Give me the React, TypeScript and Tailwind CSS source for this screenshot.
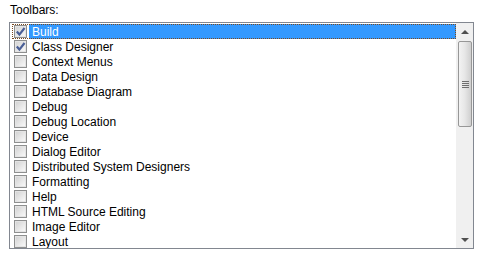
import React from 'react';

const items = [
  'Build',
  'Class Designer',
  'Context Menus',
  'Data Design',
  'Database Diagram',
  'Debug',
  'Debug Location',
  'Device',
  'Dialog Editor',
  'Distributed System Designers',
  'Formatting',
  'Help',
  'HTML Source Editing',
  'Image Editor',
  'Layout',
];

const checked = new Set(['Build', 'Class Designer']);

const Check: React.FC<{ on: boolean }> = ({ on }) => (
  <div className="w-[13px] h-[13px] border border-[#8e8f8f] bg-white flex items-center justify-center shrink-0">
    <div className="w-[11px] h-[11px] border border-[#e4e4e4] bg-gradient-to-br from-[#d4d4d4] to-[#f8f8f8] relative">
      {on && (
        <svg viewBox="0 0 9 9" className="absolute -left-px -top-px w-[11px] h-[11px]">
          <path d="M1.5 4.5 L3.6 7 L7.8 1.6" fill="none" stroke="#4a5f97" strokeWidth="1.8" />
        </svg>
      )}
    </div>
  </div>
);

const Row: React.FC<{ label: string; selected: boolean }> = ({ label, selected }) => (
  <div
    className={`h-[15px] flex items-center ${selected ? 'outline-1 outline-dotted outline-[#7a4a20] -outline-offset-1' : ''}`}
  >
    <div className="w-[17px] h-full flex items-center justify-center shrink-0">
      <Check on={checked.has(label)} />
    </div>
    <div
      className={`flex-1 h-full flex items-center pl-[3px] ${selected ? 'bg-[#3399ff] text-white' : 'text-black'}`}
    >
      {label}
    </div>
  </div>
);

const ScrollBar: React.FC = () => (
  <div className="w-[17px] bg-[#f0f0f0] border-l border-[#f0f0f0] flex flex-col shrink-0">
    <div className="h-[17px] flex items-center justify-center">
      <div className="w-0 h-0 border-l-[4px] border-r-[4px] border-b-[4px] border-l-transparent border-r-transparent border-b-[#505050]" />
    </div>
    <div className="mx-[1px] mt-[1px] h-[86px] border border-[#979797] rounded-[2px] bg-gradient-to-r from-[#f3f3f3] via-[#e6e6e6] to-[#cfcfcf] flex items-center justify-center">
      <div className="flex flex-col gap-[1px]">
        <div className="w-[7px] h-px bg-[#6f6f6f]" />
        <div className="w-[7px] h-px bg-[#6f6f6f]" />
        <div className="w-[7px] h-px bg-[#6f6f6f]" />
        <div className="w-[7px] h-px bg-[#6f6f6f]" />
      </div>
    </div>
    <div className="flex-1" />
    <div className="h-[17px] flex items-center justify-center">
      <div className="w-0 h-0 border-l-[4px] border-r-[4px] border-t-[4px] border-l-transparent border-r-transparent border-t-[#505050]" />
    </div>
  </div>
);

export default function App() {
  return (
    <div
      className="w-[485px] h-[263px] bg-white text-[12px] leading-none"
      style={{ fontFamily: 'Tahoma, "Liberation Sans", sans-serif' }}
    >
      <div className="pt-[4px] pl-[10px] h-[22px] text-black">Toolbars:</div>
      <div className="ml-[9px] w-[465px] h-[227px] border border-[#828790] flex">
        <div className="flex-1 pt-[1px] pl-[2px] overflow-hidden">
          {items.map((it, i) => (
            <Row key={it} label={it} selected={i === 0} />
          ))}
        </div>
        <ScrollBar />
      </div>
    </div>
  );
}
